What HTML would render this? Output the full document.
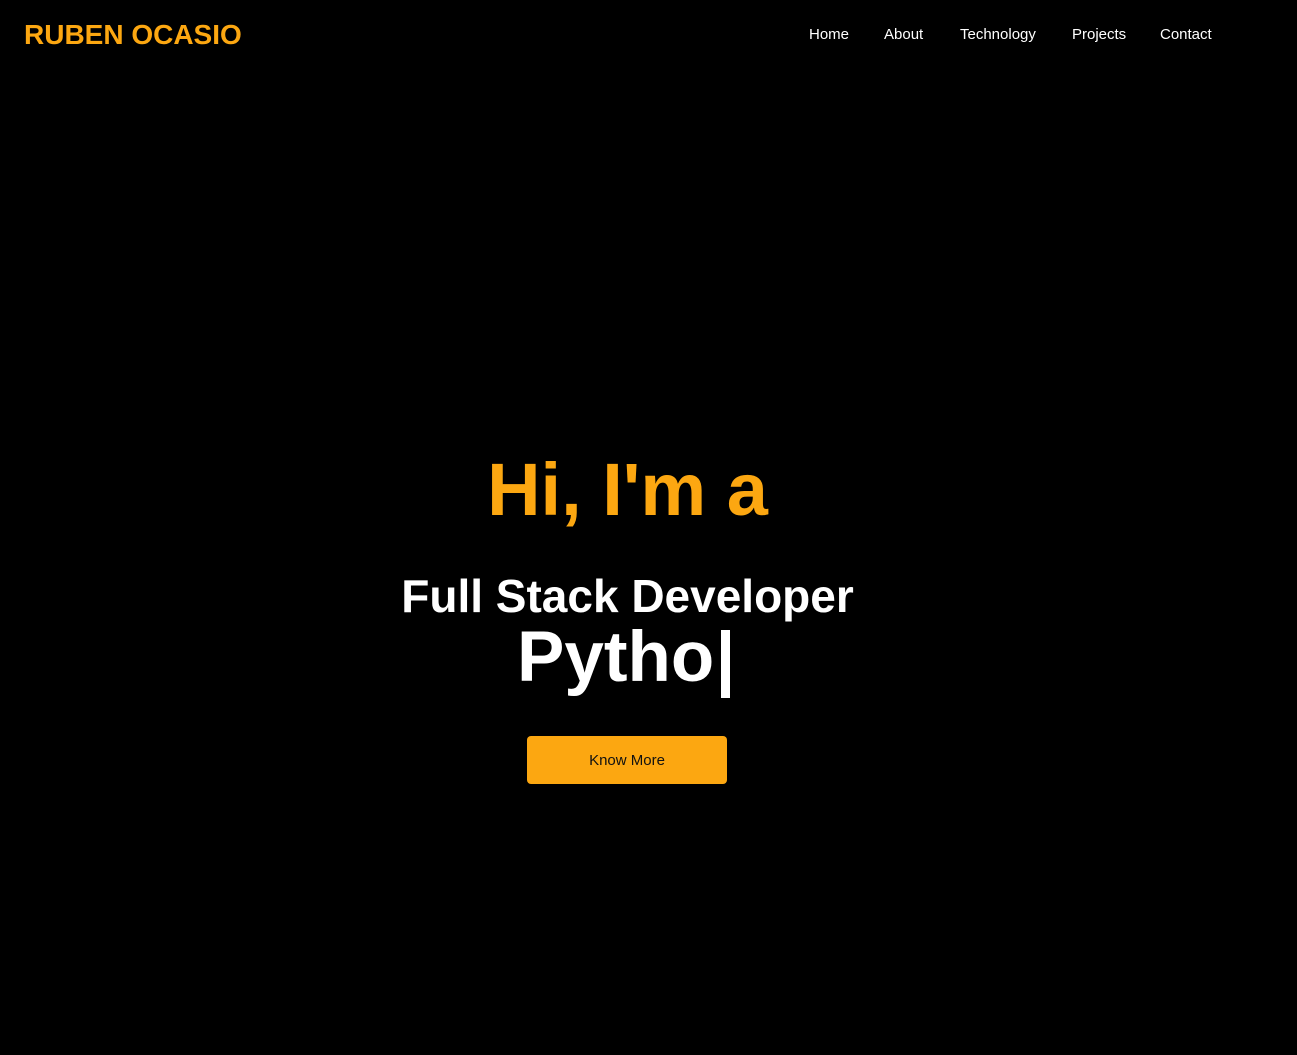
<!DOCTYPE html>
<html><head><meta charset="utf-8"><style>
html,body{margin:0;padding:0;background:#000;width:1297px;height:1055px;overflow:hidden;font-family:"Liberation Sans",sans-serif}
.abs{position:absolute;white-space:nowrap}
.logo{left:24px;top:19px;color:#fca711;font-weight:bold;font-size:28px}
.nav{top:26px;color:#fff;font-size:15px}
.c{left:-21px;width:1297px;text-align:center;font-weight:bold}
.btn{left:527px;top:736px;width:200px;height:48px;background:#fca711;border-radius:4px;color:#111;font-size:15px;line-height:50px;text-align:center}
</style></head><body>
<div class="abs logo">RUBEN OCASIO</div>
<div class="abs nav" style="left:809px">Home</div>
<div class="abs nav" style="left:884px">About</div>
<div class="abs nav" style="left:960px">Technology</div>
<div class="abs nav" style="left:1072px">Projects</div>
<div class="abs nav" style="left:1160px">Contact</div>
<div class="abs c" style="top:447px;font-size:74px;color:#fca711">Hi, I'm a</div>
<div class="abs c" style="top:569px;font-size:46px;color:#fff">Full Stack Developer</div>
<div class="abs" style="left:517px;top:617px;font-size:71px;font-weight:bold;color:#fff">Pytho</div>
<div class="abs" style="left:721px;top:630px;width:9px;height:68px;background:#fff"></div>
<div class="abs btn">Know More</div>
</body></html>
